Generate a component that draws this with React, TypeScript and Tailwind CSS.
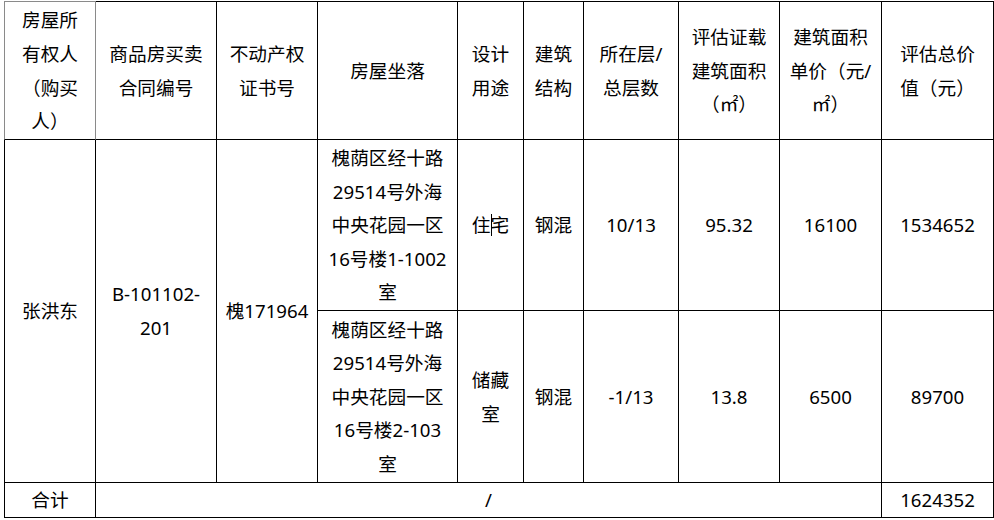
import React from "react";

const cell =
  "border-r border-b border-black flex items-center justify-center text-center";

function Lines({ lines }: { lines: React.ReactNode[] }) {
  return (
    <div className="flex flex-col items-center">
      {lines.map((l, i) => (
        <div key={i} className="whitespace-nowrap">
          {l}
        </div>
      ))}
    </div>
  );
}

export default function App() {
  return (
    <div
      className="bg-white w-[994px] h-[520px] text-black text-[18.67px] leading-[33.6px]"
      style={{ fontFamily: '"Noto Sans", "Noto Sans CJK SC", sans-serif' }}
    >
      <div className="ml-[4px] pt-px grid w-max grid-cols-[92px_121px_101px_140px_66px_60px_95px_101px_102px_112px] grid-rows-[139px_171px_172px_35px]">
        {/* header */}
        <div className="border border-[#8a8a8a] border-b-black flex items-center justify-center text-center">
          <Lines lines={["房屋所", "有权人", "（购买", "人）"]} />
        </div>
        <div className={cell + " border-t"}>
          <Lines lines={["商品房买卖", "合同编号"]} />
        </div>
        <div className={cell + " border-t"}>
          <Lines lines={["不动产权", "证书号"]} />
        </div>
        <div className={cell + " border-t"}>
          <Lines lines={["房屋坐落"]} />
        </div>
        <div className={cell + " border-t"}>
          <Lines lines={["设计", "用途"]} />
        </div>
        <div className={cell + " border-t"}>
          <Lines lines={["建筑", "结构"]} />
        </div>
        <div className={cell + " border-t"}>
          <Lines lines={["所在层/", "总层数"]} />
        </div>
        <div className={cell + " border-t"}>
          <Lines lines={["评估证载", "建筑面积", "（㎡）"]} />
        </div>
        <div className={cell + " border-t"}>
          <Lines lines={["建筑面积", "单价（元/", "㎡）"]} />
        </div>
        <div className={cell + " border-t"}>
          <Lines lines={["评估总价", "值（元）"]} />
        </div>

        {/* body row 1 */}
        <div className={cell + " border-l row-span-2"}>张洪东</div>
        <div className={cell + " row-span-2"}>
          <Lines lines={["B-101102-", "201"]} />
        </div>
        <div className={cell + " row-span-2"}>槐171964</div>
        <div className={cell}>
          <Lines
            lines={["槐荫区经十路", "29514号外海", "中央花园一区", "16号楼1-1002", "室"]}
          />
        </div>
        <div className={cell}>
          <span className="whitespace-nowrap">
            住
            <span className="inline-block w-0 h-[22px] border-l border-black -mr-px align-[-4px]" />
            宅
          </span>
        </div>
        <div className={cell}>钢混</div>
        <div className={cell}>10/13</div>
        <div className={cell}>95.32</div>
        <div className={cell}>16100</div>
        <div className={cell}>1534652</div>

        {/* body row 2 */}
        <div className={cell}>
          <Lines
            lines={["槐荫区经十路", "29514号外海", "中央花园一区", "16号楼2-103", "室"]}
          />
        </div>
        <div className={cell}>
          <Lines lines={["储藏", "室"]} />
        </div>
        <div className={cell}>钢混</div>
        <div className={cell}>-1/13</div>
        <div className={cell}>13.8</div>
        <div className={cell}>6500</div>
        <div className={cell}>89700</div>

        {/* total */}
        <div className={cell + " border-l"}>合计</div>
        <div className={cell + " col-span-8"}>/</div>
        <div className={cell}>1624352</div>
      </div>
    </div>
  );
}
